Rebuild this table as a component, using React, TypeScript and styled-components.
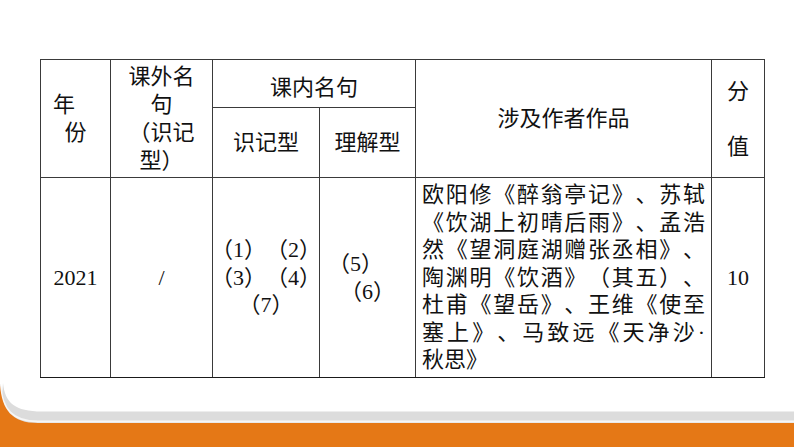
import React from "react";
import styled, { createGlobalStyle } from "styled-components";

const GlobalStyle = createGlobalStyle`
    html, body {
        margin: 0;
        padding: 0;
        background: #ffffff;
    }
    body {
        text-spacing-trim: space-all;
    }
`;

const Page = styled.div`
    width: 794px;
    height: 447px;
    display: flex;
    flex-direction: column;
    padding-top: 59px;
    box-sizing: border-box;
    overflow: hidden;
    background: #ffffff;
`;

const Table = styled.table`
    margin-left: 40px;
    width: 724px;
    border-collapse: collapse;
    table-layout: fixed;
    color: #111111;
`;

const Row = styled.tr<{ $h: number }>`
    height: ${(p) => p.$h}px;
`;

const HeadCell = styled.th<{ $padTop?: number }>`
    border: 1px solid #3a3a3a;
    padding: ${(p) => p.$padTop || 0}px 0 0 0;
    font-family: "Liberation Sans", "Noto Sans CJK SC", sans-serif;
    font-size: 22px;
    font-weight: 400;
    line-height: 28px;
    text-align: center;
    vertical-align: middle;
`;

const BodyCell = styled.td<{ $pad?: number }>`
    border: 1px solid #3a3a3a;
    border-bottom: 1px solid #1a1a1a;
    padding: 0 ${(p) => p.$pad || 0}px;
    font-family: "Liberation Serif", "Noto Sans CJK SC", serif;
    font-size: 22px;
    line-height: 27.5px;
    text-align: center;
    vertical-align: middle;
`;

const Line = styled.div<{ $shift?: number }>`
    display: flex;
    justify-content: center;
    white-space: nowrap;
    padding-right: ${(p) => p.$shift || 0}px;
`;

const TallLine = styled.div`
    line-height: 55px;
`;

const TextLine = styled.div<{ $last?: boolean }>`
    white-space: nowrap;
    text-align: ${(p) => (p.$last ? "left" : "justify")};
    text-align-last: ${(p) => (p.$last ? "left" : "justify")};
`;

const Footer = styled.div`
    margin-top: auto;
    height: 64px;
    flex-shrink: 0;
`;

const FooterArt = () => (
    <svg width="794" height="64" viewBox="0 0 794 64">
        <path d="M3 0 C5 20 15 28.5 42 28.5 L794 28.5 L794 40 L0 40 Z" fill="#dcdcdc" />
        <path d="M0 1 C2 26 12 38.5 38 38.5 L794 38.5" fill="none" stroke="#f6f6f6" strokeWidth="2" />
        <path d="M0 2 C2 27 12 40 38 40 L794 40 L794 64 L0 64 Z" fill="#e57816" />
    </svg>
);

const authorLines = [
    "欧阳修《醉翁亭记》、苏轼",
    "《饮湖上初晴后雨》、孟浩",
    "然《望洞庭湖赠张丞相》、",
    "陶渊明《饮酒》（其五）、",
    "杜甫《望岳》、王维《使至",
    "塞上》、马致远《天净沙·",
    "秋思》",
];

const App = () => {
    return (
        <Page>
            <GlobalStyle />
            <Table>
                <colgroup>
                    <col style={{ width: 70 }} />
                    <col style={{ width: 102 }} />
                    <col style={{ width: 107 }} />
                    <col style={{ width: 96 }} />
                    <col style={{ width: 296 }} />
                    <col style={{ width: 53 }} />
                </colgroup>
                <thead>
                    <Row $h={48}>
                        <HeadCell rowSpan={2}>
                            <Line $shift={23}>年</Line>
                            <Line>份</Line>
                        </HeadCell>
                        <HeadCell rowSpan={2}>
                            <Line>课外名</Line>
                            <Line>句</Line>
                            <Line>（识记</Line>
                            <Line>型）</Line>
                        </HeadCell>
                        <HeadCell colSpan={2} $padTop={8}>课内名句</HeadCell>
                        <HeadCell rowSpan={2}>涉及作者作品</HeadCell>
                        <HeadCell rowSpan={2}>
                            <TallLine>分</TallLine>
                            <TallLine>值</TallLine>
                        </HeadCell>
                    </Row>
                    <Row $h={70}>
                        <HeadCell>识记型</HeadCell>
                        <HeadCell>理解型</HeadCell>
                    </Row>
                </thead>
                <tbody>
                    <Row $h={200}>
                        <BodyCell>2021</BodyCell>
                        <BodyCell>/</BodyCell>
                        <BodyCell>
                            <Line>（1）（2）</Line>
                            <Line>（3）（4）</Line>
                            <Line>（7）</Line>
                        </BodyCell>
                        <BodyCell>
                            <Line $shift={24}>（5）</Line>
                            <Line>（6）</Line>
                        </BodyCell>
                        <BodyCell $pad={6}>
                            {authorLines.map((l, i) => (
                                <TextLine key={i} $last={i === authorLines.length - 1}>
                                    {l}
                                </TextLine>
                            ))}
                        </BodyCell>
                        <BodyCell>10</BodyCell>
                    </Row>
                </tbody>
            </Table>
            <Footer>
                <FooterArt />
            </Footer>
        </Page>
    );
};

export default App;
